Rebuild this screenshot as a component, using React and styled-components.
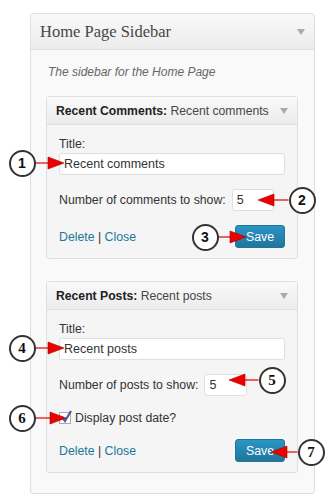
import styled, { createGlobalStyle } from "styled-components"

const GlobalStyle = createGlobalStyle`
    html, body {
        margin: 0;
        padding: 0;
        background: #ffffff;
    }
    body {
        font-family: "Liberation Sans", Arial, sans-serif;
        color: #333;
    }
`;

const widgets = [
    {
        name: "Recent Comments",
        title: "Recent comments",
        countLabel: "Number of comments to show:",
        countWidth: 42,
        showDate: false,
    },
    {
        name: "Recent Posts",
        title: "Recent posts",
        countLabel: "Number of posts to show:",
        countWidth: 43,
        showDate: true,
    },
];

// callouts drawn on top of the screenshot
const callouts = [
    { n: 1, cx: 22, cy: 163, tip: 64, dir: "right" },
    { n: 2, cx: 302, cy: 200, tip: 258, dir: "left" },
    { n: 3, cx: 205, cy: 237, tip: 246, dir: "right" },
    { n: 4, cx: 22, cy: 348, tip: 64, dir: "right", serif: true },
    { n: 5, cx: 272, cy: 380, tip: 229, dir: "left", serif: true },
    { n: 6, cx: 22, cy: 418, tip: 66, dir: "right", serif: true },
    { n: 7, cx: 311, cy: 452, tip: 271, dir: "left", serif: true },
];

const R = 13.5;

const HeadArrow = () => (
    <svg width="8" height="6" viewBox="0 0 8 6">
        <path d="M0 0 L8 0 L4 6 Z" fill="#aaa" />
    </svg>
);

const Widget = ({ w }) => (
    <WidgetBox>
        <WidgetHead>
            <span>
                <b>{w.name}:</b> <Sub>{w.title}</Sub>
            </span>
            <HeadArrow />
        </WidgetHead>
        <WidgetBody>
            <Label>Title:</Label>
            <TextInput>{w.title}</TextInput>
            <Row>
                <span>{w.countLabel}</span>
                <SmallInput $width={w.countWidth}>5</SmallInput>
            </Row>
            {w.showDate && (
                <CheckRow>
                    <CheckBox>
                        <svg width="12" height="13" viewBox="0 0 12 13">
                            <path d="M2 7 L5 11 L11 1" stroke="#4a5fa8" strokeWidth="2.2" fill="none" />
                        </svg>
                    </CheckBox>
                    <span>Display post date?</span>
                </CheckRow>
            )}
            <Actions $tight={w.showDate}>
                <Links>
                    <a>Delete</a> | <a>Close</a>
                </Links>
                <SaveButton>Save</SaveButton>
            </Actions>
        </WidgetBody>
    </WidgetBox>
);

const Callouts = () => (
    <>
        <Overlay width="328" height="502">
            {callouts.map((c) => {
                const s = c.dir === "right" ? 1 : -1;
                const edge = c.cx + s * R;
                const base = c.tip - s * 16;
                return (
                    <g key={c.n}>
                        <line x1={edge} y1={c.cy} x2={base} y2={c.cy} stroke="#e00000" strokeWidth="1.2" />
                        <path
                            d={`M${base} ${c.cy - 6} L${c.tip} ${c.cy} L${base} ${c.cy + 6} Z`}
                            fill="#ee0000"
                            stroke="#a00000"
                            strokeWidth="0.6"
                        />
                    </g>
                );
            })}
        </Overlay>
        {callouts.map((c) => (
            <Circle key={c.n} $serif={c.serif} style={{ left: c.cx - R, top: c.cy - R }}>
                {c.n}
            </Circle>
        ))}
    </>
);

const App = () => {
    return (
        <Page>
            <GlobalStyle />
            <Panel>
                <PanelHead>
                    <h3>Home Page Sidebar</h3>
                    <HeadArrow />
                </PanelHead>
                <PanelBody>
                    <Description>The sidebar for the Home Page</Description>
                    {widgets.map((w) => (
                        <Widget key={w.name} w={w} />
                    ))}
                </PanelBody>
            </Panel>
            <Callouts />
        </Page>
    )
}

const Page = styled.div`
    position: relative;
    width: 328px;
    height: 502px;
    overflow: hidden;
    padding-top: 13px;
    box-sizing: border-box;
`;

const Panel = styled.div`
    margin-left: 30px;
    width: 285px;
    box-sizing: border-box;
    border: 1px solid #dfdfdf;
    border-radius: 3px;
    background: #f9f9f9;
`;

const PanelHead = styled.div`
    height: 35px;
    display: flex;
    align-items: center;
    justify-content: space-between;
    padding: 0 9px 0 9px;
    background: linear-gradient(to bottom, #f9f9f9, #ececec);
    border-bottom: 1px solid #dfdfdf;
    border-radius: 3px 3px 0 0;

    h3{
        margin: 0;
        font-family: "Liberation Serif", "Times New Roman", serif;
        font-weight: normal;
        font-size: 16.5px;
        color: #464646;
    }
`;

const PanelBody = styled.div`
    padding: 14px 16px 20px 15px;
`;

const Description = styled.p`
    margin: 0 0 16px 2px;
    font-size: 12px;
    line-height: 16px;
    font-style: italic;
    color: #666;
`;

const WidgetBox = styled.div`
    border: 1px solid #dfdfdf;
    border-radius: 3px;
    background: #f5f5f5;
    margin-bottom: 22px;

    &:last-child{
        margin-bottom: 0;
    }
`;

const WidgetHead = styled.div`
    height: 27px;
    display: flex;
    align-items: center;
    justify-content: space-between;
    padding: 0 9px 0 9px;
    background: linear-gradient(to bottom, #f9f9f9, #ececec);
    border-bottom: 1px solid #dfdfdf;
    font-size: 12.2px;
    color: #222;

    b{
        font-weight: bold;
    }
`;

const Sub = styled.span`
    color: #464646;
`;

const WidgetBody = styled.div`
    padding: 12px 12px 10px 12px;
    font-size: 12.3px;
    color: #333;
`;

const Label = styled.div`
    line-height: 15px;
`;

const TextInput = styled.div`
    margin-top: 1px;
    height: 22px;
    box-sizing: border-box;
    border: 1px solid #dfdfdf;
    border-radius: 3px;
    background: #fff;
    padding: 0 4px;
    display: flex;
    align-items: center;
    font-size: 12.5px;
    color: #333;
`;

const Row = styled.div`
    margin-top: 14px;
    display: flex;
    align-items: center;
    gap: 6px;
`;

const SmallInput = styled(TextInput)`
    margin-top: 0;
    width: ${(p) => p.$width}px;
`;

const CheckRow = styled.div`
    margin-top: 14px;
    height: 16px;
    display: flex;
    align-items: center;
    gap: 4px;
`;

const CheckBox = styled.div`
    position: relative;
    width: 12px;
    height: 12px;
    box-sizing: border-box;
    border: 1px solid #aaa;
    background: #fff;

    svg{
        position: absolute;
        left: 0;
        top: -3px;
    }
`;

const Actions = styled.div`
    margin-top: ${(p) => (p.$tight ? 13 : 14)}px;
    display: flex;
    align-items: center;
    justify-content: space-between;
`;

const Links = styled.div`
    color: #333;

    a{
        color: #21759b;
        text-decoration: none;
    }
`;

const SaveButton = styled.button`
    width: 50px;
    height: 23px;
    border: 1px solid #21759b;
    border-radius: 3px;
    background: linear-gradient(to bottom, #2a95c5, #21759b);
    color: #fff;
    font-family: "Liberation Sans", Arial, sans-serif;
    font-size: 12.3px;
    padding: 0;
`;

const Overlay = styled.svg`
    position: absolute;
    left: 0;
    top: 0;
    pointer-events: none;
`;

const Circle = styled.div`
    position: absolute;
    width: ${R * 2}px;
    height: ${R * 2}px;
    box-sizing: border-box;
    border: 2px solid #333;
    border-radius: 50%;
    background: #fff;
    display: flex;
    align-items: center;
    justify-content: center;
    font-family: ${(p) => (p.$serif ? `"Liberation Serif", serif` : `"Liberation Sans", Arial, sans-serif`)};
    font-weight: bold;
    font-size: ${(p) => (p.$serif ? 15 : 14)}px;
    color: #111;
`;

export default App
